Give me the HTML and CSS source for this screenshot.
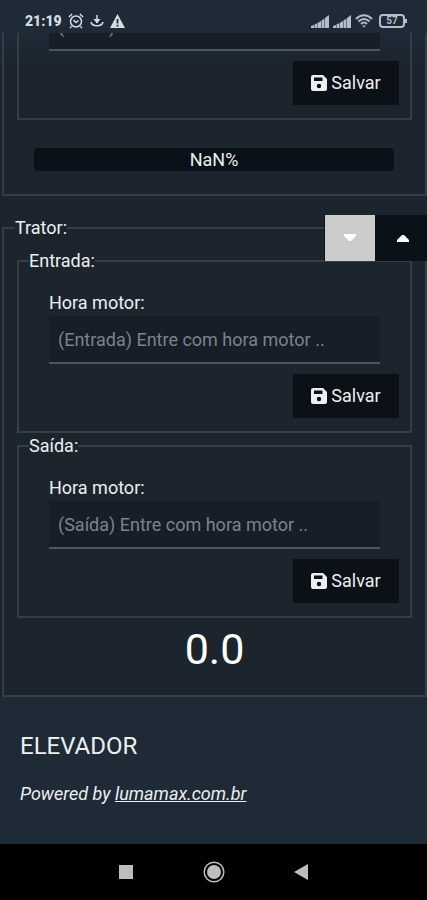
FILE: index.html
```html
<!DOCTYPE html>
<html lang="pt-BR">
<head>
<meta charset="utf-8">
<meta name="viewport" content="width=device-width, initial-scale=1">
<title>Elevador</title>
<link rel="stylesheet" href="styles.css">
</head>
<body>
<svg class="sprite" aria-hidden="true">
  <symbol id="save" viewBox="0 0 16 16"><path fill-rule="evenodd" d="M2 0h10L16 4v10a2 2 0 0 1-2 2H2a2 2 0 0 1-2-2V2a2 2 0 0 1 2-2zM3 2.500V6h8.500V2.500zM8 8.800a2.200 2.200 0 1 0 0 4.400 2.200 2.200 0 0 0 0-4.400z"/></symbol>
  <symbol id="signal" viewBox="0 0 18 13"><path d="M0 13v-2l3-1v3zM3.500 13V9.500l3-1.500v5zM7 13V7.800L10 6v7zM10.500 13V5.500l3-2V13zM14 13V3l4-3v13z"/></symbol>
</svg>
<div class="screen">
  <header class="status">
    <div class="status-group">
      <span class="clock">21:19</span>
      <svg class="line" width="16" height="16" viewBox="0 0 16 16"><circle cx="8" cy="8.500" r="5.500"/><path d="M1 4l3-3M15 4l-3-3M3.500 13.500L2 15M12.500 13.500L14 15M5.500 7L8 9.500l2.500-2"/></svg>
      <svg class="line" width="14" height="14" viewBox="0 0 14 14"><path d="M7 1v8M1 8c1 5 11 5 12 0"/><path class="solid" d="M3.500 5h7L7 9.500z"/></svg>
      <svg width="15" height="14" viewBox="0 0 15 14"><path fill-rule="evenodd" d="M7.500 0L15 14H0zM6.600 5v4.500h1.800V5zM6.600 10.800v1.700h1.800v-1.700z"/></svg>
    </div>
    <div class="status-group status-right">
      <svg width="18" height="13"><use href="#signal"/></svg>
      <svg width="18" height="13"><use href="#signal"/></svg>
      <svg class="line wifi" width="18" height="14" viewBox="0 0 18 14"><path d="M1 5c5-5 11-5 16 0M3.500 7.500c4-3.500 7-3.500 11 0M6 10c2-2 4-2 6 0"/><path class="solid" d="M7 11.500h4L9 13.500z"/></svg>
      <span class="battery">57</span>
    </div>
  </header>

  <main>
    <div class="scrolled">
      <fieldset class="card">
        <fieldset class="group">
          <input type="text" class="field" aria-label="Hora motor" placeholder="(Saída) Entre com hora motor ..">
          <button type="button" class="save"><svg width="16" height="16"><use href="#save"/></svg>Salvar</button>
        </fieldset>
        <div class="progress" role="progressbar">NaN%</div>
      </fieldset>
    </div>

    <fieldset class="card">
      <legend>Trator:</legend>
      <div class="sorter">
        <button type="button" class="down" aria-label="Descer"><svg width="14" height="8" viewBox="0 0 14 8"><path d="M1 0h12v2L8 7H6L1 2z"/></svg></button>
        <button type="button" class="up" aria-label="Subir"><svg width="14" height="8" viewBox="0 0 14 8"><path d="M1 8h12V6L8 1H6L1 6z"/></svg></button>
      </div>
      <fieldset class="group">
        <legend>Entrada:</legend>
        <label for="entrada">Hora motor:</label>
        <input type="text" class="field" id="entrada" placeholder="(Entrada) Entre com hora motor ..">
        <button type="button" class="save"><svg width="16" height="16"><use href="#save"/></svg>Salvar</button>
      </fieldset>
      <fieldset class="group">
        <legend>Saída:</legend>
        <label for="saida">Hora motor:</label>
        <input type="text" class="field" id="saida" placeholder="(Saída) Entre com hora motor ..">
        <button type="button" class="save"><svg width="16" height="16"><use href="#save"/></svg>Salvar</button>
      </fieldset>
      <output class="total">0.0</output>
    </fieldset>
  </main>

  <footer>
    <h2>ELEVADOR</h2>
    <p>Powered by <a href="#">lumamax.com.br</a></p>
  </footer>

  <nav class="system">
    <button type="button" aria-label="Recentes"><svg width="22" height="22" viewBox="0 0 22 22"><path d="M4 4h14v14H4z"/></svg></button>
    <button type="button" aria-label="Início"><svg width="22" height="22" viewBox="0 0 22 22"><circle cx="11" cy="11" r="7"/><circle class="ring" cx="11" cy="11" r="9.800"/></svg></button>
    <button type="button" aria-label="Voltar"><svg width="22" height="22" viewBox="0 0 22 22"><path d="M3 11L17 3v16z"/></svg></button>
  </nav>
</div>
</body>
</html>
```
FILE: styles.css
```css
* { box-sizing: border-box; }

body {
  margin: 0;
  background: #1e2a35;
  color: #eceff1;
  font: 18px/20px Roboto, sans-serif;
}

button, input { font: inherit; color: inherit; }
svg { fill: currentColor; flex: none; }
.sprite { position: absolute; width: 0; height: 0; }

.screen {
  display: flex;
  flex-direction: column;
  min-height: 100vh;
}

.status {
  display: flex;
  justify-content: space-between;
  align-items: flex-end;
  height: 33px;
  padding: 0 22px 4px 25px;
  color: #d5dce4;
}
.status-group { display: flex; align-items: center; gap: 6px; height: 16px; }
.status-right { gap: 4px; color: #b4bdc8; }
.clock { font-size: 14px; font-weight: 900; }
.line { fill: none; stroke: currentColor; stroke-width: 1.5; }
.wifi { stroke-width: 2; }
.solid { fill: currentColor; stroke: none; }
.battery {
  position: relative;
  width: 26px;
  height: 14px;
  margin-left: 2px;
  border: 2px solid currentColor;
  border-radius: 4px;
  font-size: 10px;
  font-weight: 700;
  line-height: 10px;
  text-align: center;
}
.battery::after {
  content: "";
  position: absolute;
  top: 3px;
  right: -4px;
  width: 2px;
  height: 4px;
  background: currentColor;
}

main { background: linear-gradient(#1e2a35, #1c252e 30px); }

.scrolled {
  display: flex;
  flex-direction: column;
  justify-content: flex-end;
  height: 163px;
  margin-bottom: 22px;
  overflow: hidden;
}

fieldset {
  min-width: 0;
  margin: 0;
  border: 2px solid #343e47;
}
legend { padding: 0; }

.card {
  position: relative;
  margin: 0 0 0 2px;
  padding: 13px 13px 15px;
}
.card > legend { margin-left: -2px; }

.group {
  display: flow-root;
  padding: 22px 11px 13px 30px;
}
.group > legend { margin-left: -20px; }
.group + .group { margin-top: 3px; }

label { display: block; margin-bottom: 3px; }

.field {
  display: block;
  width: calc(100% - 19px);
  height: 48px;
  padding: 0 9px;
  border: 0;
  border-bottom: 2px solid #4c565e;
  border-radius: 0;
  background: #161e27;
}
.field::placeholder { color: #7c8389; opacity: 1; }

.save {
  display: flex;
  align-items: center;
  justify-content: center;
  gap: 4px;
  width: 106px;
  height: 44px;
  margin: 10px 0 0 auto;
  padding: 0;
  border: 0;
  background: #0b1117;
}

.progress {
  height: 23px;
  margin: 28px 18px 8px 17px;
  border-radius: 4px;
  background: #0a1118;
  line-height: 24px;
  text-align: center;
}

.sorter {
  position: absolute;
  top: -23px;
  right: -2px;
  display: flex;
}
.sorter button {
  display: flex;
  align-items: center;
  justify-content: center;
  height: 46px;
  padding: 0;
  border: 0;
  color: #fff;
}
.sorter .down { width: 54px; border: solid #0b1118; border-width: 0 3px 0 1px; background: #cbcbcb; }
.sorter .up { width: 49px; background: #0b1118; }

.total {
  display: block;
  color: #fff;
  font-size: 43px;
  line-height: 62px;
  text-align: center;
}

footer { flex: 1; padding: 35px 20px 34px; }
h2 { margin: 0; font-size: 24px; font-weight: 400; line-height: 28px; }
footer p { margin: 24px 0 0; font-style: italic; }
a { color: inherit; }

.system {
  display: flex;
  justify-content: center;
  gap: 66px;
  height: 56px;
  background: #000;
}
.system button {
  display: flex;
  align-items: center;
  padding: 0;
  border: 0;
  background: none;
  color: #bdbdbd;
}
.ring { fill: none; stroke: currentColor; stroke-width: 1.5; }
```
